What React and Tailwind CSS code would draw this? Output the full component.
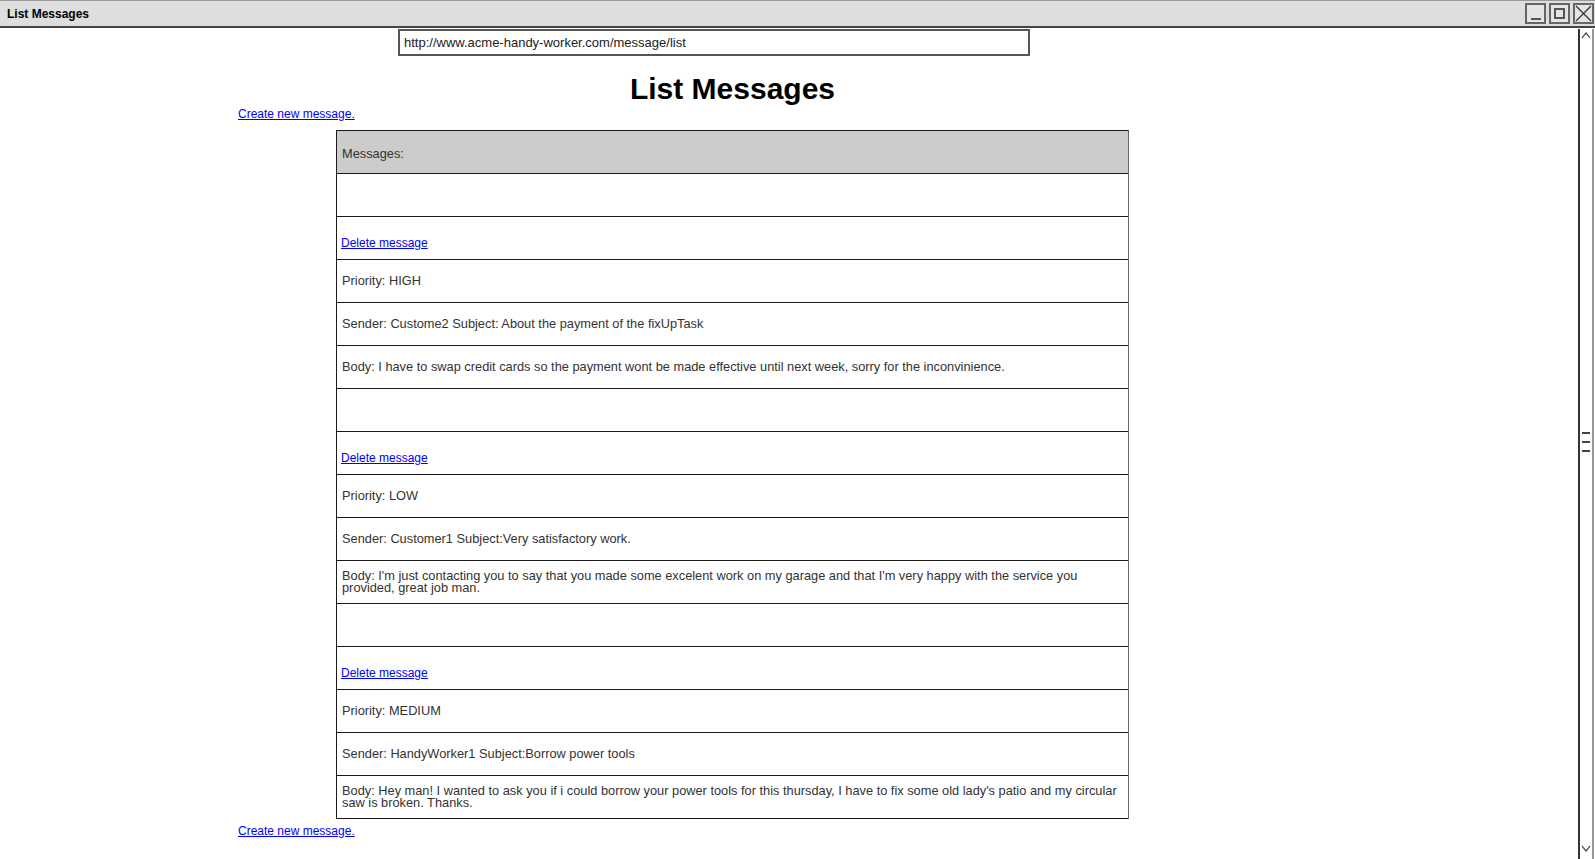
import React from 'react';

const messages = [
  {
    priority: 'HIGH',
    sender: 'Sender: Custome2 Subject: About the payment of the fixUpTask',
    body: 'Body: I have to swap credit cards so the payment wont be made effective until next week, sorry for the inconvinience.',
  },
  {
    priority: 'LOW',
    sender: 'Sender: Customer1 Subject:Very satisfactory work.',
    body: "Body: I'm just contacting you to say that you made some excelent work on my garage and that I'm very happy with the service you provided, great job man.",
  },
  {
    priority: 'MEDIUM',
    sender: 'Sender: HandyWorker1 Subject:Borrow power tools',
    body: "Body: Hey man! I wanted to ask you if i could borrow your power tools for this thursday, I have to fix some old lady's patio and my circular saw is broken. Thanks.",
  },
];

const Row = ({ children, className = '' }) => (
  <div className={`h-[43px] border-b border-[#1a1a1a] flex items-center px-[4px] text-[12.8px] leading-[12px] text-[#333] ${className}`}>
    {children}
  </div>
);

const WinButton = ({ children }) => (
  <div className="w-[21px] h-[21px] border-2 border-[#666] bg-[#e4e4e4] flex items-center justify-center">
    {children}
  </div>
);

const App = () => {
  return (
    <div className="w-[1595px] h-[859px] overflow-hidden bg-white flex flex-col" style={{ fontFamily: '"Liberation Sans", Arial, sans-serif' }}>
      {/* window title bar */}
      <div className="h-[28px] shrink-0 bg-[#dedede] border-t border-[#999] border-b-2 border-b-[#444] flex items-center justify-between pl-[7px] pr-[1px]">
        <span className="text-[12px] font-bold text-black mt-[1px]">List Messages</span>
        <div className="flex gap-[3px]">
          <WinButton>
            <div className="w-[10px] h-[2px] bg-[#555] mt-[10px]" />
          </WinButton>
          <WinButton>
            <div className="w-[11px] h-[11px] border-2 border-[#555]" />
          </WinButton>
          <WinButton>
            <svg width="17" height="17" viewBox="0 0 17 17">
              <path d="M1 1 L16 16 M16 1 L1 16" stroke="#333" strokeWidth="1.3" />
            </svg>
          </WinButton>
        </div>
      </div>

      <div className="flex-1 flex min-h-0">
        {/* page content */}
        <div className="flex-1 flex flex-col">
          <div className="ml-[398px] w-[632px] h-[27px] mt-[1px] border-2 border-[#555] flex items-center px-[4px] text-[13px] text-[#222]">
            http://www.acme-handy-worker.com/message/list
          </div>

          <div className="ml-[336px] w-[793px] mt-[16px] text-center text-[30px] leading-[34px] font-bold text-black">
            List Messages
          </div>

          <div className="ml-[238px] text-[12px] leading-[16px]">
            <a href="#" className="text-[#0000ff] underline">Create new message.</a>
          </div>

          <div className="ml-[336px] w-[793px] mt-[8px] border border-b-0 border-[#1a1a1a] border-r-[#666]">
            <Row className="bg-[#cccccc]">
              <span className="ml-[1px] mt-[3px]">Messages:</span>
            </Row>
            {messages.map((m, i) => (
              <React.Fragment key={i}>
                <Row />
                <Row className="!items-end pb-[9px]">
                  <a href="#" className="text-[#0000ff] underline leading-[14px] text-[12px]">Delete message</a>
                </Row>
                <Row><span className="ml-[1px]">Priority: {m.priority}</span></Row>
                <Row><span className="ml-[1px]">{m.sender}</span></Row>
                <Row><span className="ml-[1px] pr-[4px]">{m.body}</span></Row>
              </React.Fragment>
            ))}
          </div>

          <div className="ml-[238px] mt-[4px] text-[12px] leading-[16px]">
            <a href="#" className="text-[#0000ff] underline">Create new message.</a>
          </div>
        </div>

        {/* scrollbar */}
        <div className="w-[16px] mr-[1px] mt-[1px] border-l-2 border-l-[#333] border-r-2 border-r-[#999] flex flex-col items-center justify-between">
          <svg width="10" height="10" viewBox="0 0 10 10" className="mt-[2px]">
            <path d="M1 7 L5 2 L9 7" stroke="#333" strokeWidth="1.2" fill="none" />
          </svg>
          <div className="flex flex-col gap-[7px]">
            <div className="w-[8px] h-[2px] bg-[#444]" />
            <div className="w-[8px] h-[2px] bg-[#444]" />
            <div className="w-[8px] h-[2px] bg-[#444]" />
          </div>
          <svg width="10" height="10" viewBox="0 0 10 10" className="mb-[6px]">
            <path d="M1 3 L5 8 L9 3" stroke="#333" strokeWidth="1.2" fill="none" />
          </svg>
        </div>
      </div>
    </div>
  );
};

export default App;
